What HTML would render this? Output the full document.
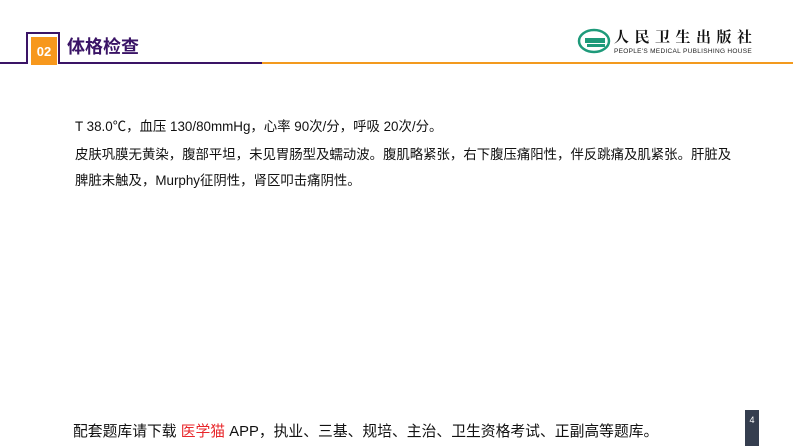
<!DOCTYPE html>
<html><head><meta charset="utf-8"><style>
body{margin:0;width:793px;height:446px;background:#fff;position:relative;overflow:hidden;font-family:"Liberation Sans","Noto Sans CJK SC",sans-serif;}
.a{position:absolute}
.t{position:absolute;left:75px;font-size:13.4px;color:#111;white-space:nowrap;line-height:16px}
</style></head><body>
<div class="a" style="left:0;top:62px;width:262px;height:2px;background:#3a1466"></div>
<div class="a" style="left:262px;top:62px;width:531px;height:2px;background:#f39a1e"></div>
<div class="a" style="left:26px;top:32px;width:30px;height:30px;border:2px solid #3a1466;border-bottom:none;background:#fff"></div>
<div class="a" style="left:31px;top:37px;width:26px;height:28px;background:#f7981d;color:#fff;font-weight:bold;font-size:13px;line-height:30px;text-align:center">02</div>
<div class="a" style="left:67px;top:36px;font-size:18px;font-weight:bold;color:#3a1466;line-height:22px">体格检查</div>
<svg class="a" style="left:577px;top:28px" width="34" height="26" viewBox="0 0 34 26"><ellipse cx="17" cy="13" rx="15" ry="11" fill="none" stroke="#1e9a7a" stroke-width="2.5"/><rect x="8" y="10" width="20" height="5" fill="#1e9a7a"/><rect x="10" y="16" width="18" height="3" fill="#1e9a7a"/></svg>
<div class="a" style="left:614px;top:28px;font-size:15px;font-weight:bold;letter-spacing:5.5px;color:#111;font-family:'Noto Serif CJK SC',serif;line-height:18px">人民卫生出版社</div>
<div class="a" style="left:614px;top:48px;font-size:6.5px;color:#222;letter-spacing:0.3px">PEOPLE'S MEDICAL PUBLISHING HOUSE</div>
<div class="t" style="top:119px">T 38.0℃，血压 130/80mmHg，心率 90次/分，呼吸 20次/分。</div>
<div class="t" style="top:147px">皮肤巩膜无黄染，腹部平坦，未见胃肠型及蠕动波。腹肌略紧张，右下腹压痛阳性，伴反跳痛及肌紧张。肝脏及</div>
<div class="t" style="top:173px">脾脏未触及，Murphy征阴性，肾区叩击痛阴性。</div>
<div class="a" style="left:73px;top:423px;font-size:14.8px;color:#111;white-space:nowrap;line-height:18px">配套题库请下载 <span style="color:#e8262a">医学猫</span> APP，执业、三基、规培、主治、卫生资格考试、正副高等题库。</div>
<div class="a" style="left:745px;top:410px;width:14px;height:36px;background:#353e4f;color:#fff;font-size:9px;text-align:center;line-height:20px">4</div>
</body></html>
